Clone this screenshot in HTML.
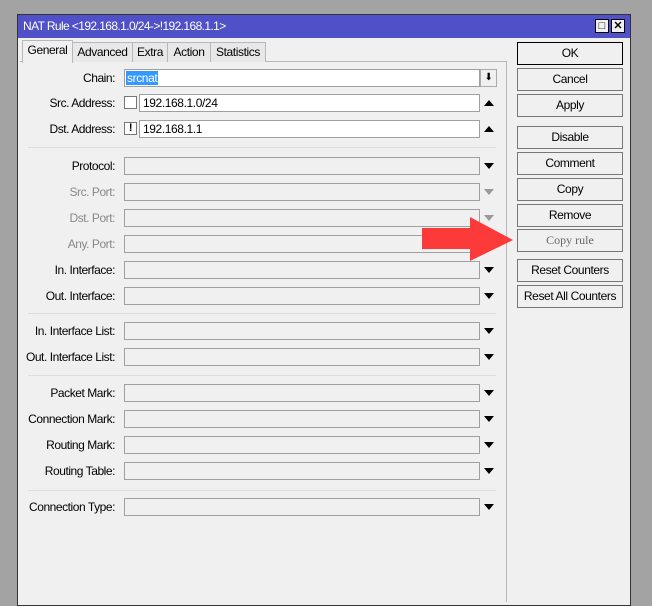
<html><head><style>
body{margin:0;width:652px;height:598px;background:#a3a3a3;position:relative;overflow:hidden;font-family:"Liberation Sans",Arial,sans-serif;font-size:12px;letter-spacing:-0.4px;color:#000}
.a{position:absolute;white-space:nowrap}
.win{left:17px;top:14px;width:612px;height:590px;background:#f0f0f0;border:1px solid #333}
.title{left:18px;top:15px;width:612px;height:23px;background:#5050c8;color:#fff;font-size:12px;line-height:23px;text-indent:5px;letter-spacing:-0.6px}
.tb{width:12px;height:12px;border:1px solid #000;background:#f0f0f0;top:19px;color:#000;font-size:11px;line-height:12px;text-align:center;font-weight:bold;letter-spacing:0}
.tab{top:42px;height:19px;border:1px solid #b8b8b8;border-bottom:none;background:#e8e8e8;line-height:19px;text-align:center;font-size:12px}
.lbl{left:0px;width:115px;text-align:right;height:18px;line-height:18px;letter-spacing:-0.45px}
.g{color:#888}
.f{left:124px;width:354px;height:16px;border:1px solid #a0a0a0;background:#f0f0f0;font-size:12px}
.w{background:#fff}
.sep{left:28px;width:468px;height:1px;background:#ddd}
.dd{left:484px;width:0;height:0;border-left:5px solid transparent;border-right:5px solid transparent;border-top:6px solid #000}
.ddg{border-top-color:#999}
.up{left:484px;width:0;height:0;border-left:5px solid transparent;border-right:5px solid transparent;border-bottom:6px solid #000}
.btn{left:517px;width:104px;height:21px;border:1px solid #777;background:#f0f0f0;text-align:center;line-height:21px;font-size:12px}
</style></head><body>
<div class="a win"></div>
<div class="a title">NAT Rule &lt;192.168.1.0/24-&gt;!192.168.1.1&gt;</div>
<div class="a tb" style="left:595px">&#9633;</div>
<div class="a tb" style="left:611px">✕</div>
<div class="a" style="left:20px;top:61px;width:486px;height:540px;border-top:1px solid #b8b8b8;border-right:1px solid #b8b8b8"></div>
<div class="a tab" style="left:22px;top:40px;width:49px;height:22px;background:#f0f0f0">General</div>
<div class="a tab" style="left:72px;width:59px">Advanced</div>
<div class="a tab" style="left:132px;width:34px">Extra</div>
<div class="a tab" style="left:167px;width:42px">Action</div>
<div class="a tab" style="left:210px;width:54px">Statistics</div>

<div class="a lbl" style="top:69px">Chain:</div>
<div class="a f w" style="top:69px;width:354px"><span style="background:#3399ff;color:#fff;padding:0 1px;margin-left:1px;line-height:16px">srcnat</span></div>
<div class="a" style="left:480px;top:69px;width:15px;height:16px;border:1px solid #aaa;background:#f0f0f0;text-align:center;font-size:10px;line-height:16px">&#11015;</div>

<div class="a lbl" style="top:94px">Src. Address:</div>
<div class="a" style="left:124px;top:96px;width:11px;height:11px;border:1px solid #777;background:#fff"></div>
<div class="a f w" style="left:139px;top:94px;width:339px;line-height:16px;text-indent:3px">192.168.1.0/24</div>
<div class="a up" style="top:100px"></div>

<div class="a lbl" style="top:120px">Dst. Address:</div>
<div class="a" style="left:124px;top:122px;width:11px;height:11px;border:1px solid #777;background:#fff;font-weight:bold;font-size:11px;line-height:11px;text-align:center">!</div>
<div class="a f w" style="left:139px;top:120px;width:339px;line-height:16px;text-indent:3px">192.168.1.1</div>
<div class="a up" style="top:126px"></div>
<div class="a sep" style="top:147px"></div>

<div class="a lbl" style="top:157px">Protocol:</div><div class="a f" style="top:157px"></div><div class="a dd" style="top:163px"></div>
<div class="a lbl g" style="top:183px">Src. Port:</div><div class="a f" style="top:183px"></div><div class="a dd ddg" style="top:189px"></div>
<div class="a lbl g" style="top:209px">Dst. Port:</div><div class="a f" style="top:209px"></div><div class="a dd ddg" style="top:215px"></div>
<div class="a lbl g" style="top:235px">Any. Port:</div><div class="a f" style="top:235px"></div>
<div class="a lbl" style="top:261px">In. Interface:</div><div class="a f" style="top:261px"></div><div class="a dd" style="top:267px"></div>
<div class="a lbl" style="top:287px">Out. Interface:</div><div class="a f" style="top:287px"></div><div class="a dd" style="top:293px"></div>
<div class="a sep" style="top:313px"></div>
<div class="a lbl" style="top:322px">In. Interface List:</div><div class="a f" style="top:322px"></div><div class="a dd" style="top:328px"></div>
<div class="a lbl" style="top:348px">Out. Interface List:</div><div class="a f" style="top:348px"></div><div class="a dd" style="top:354px"></div>
<div class="a sep" style="top:375px"></div>
<div class="a lbl" style="top:384px">Packet Mark:</div><div class="a f" style="top:384px"></div><div class="a dd" style="top:390px"></div>
<div class="a lbl" style="top:410px">Connection Mark:</div><div class="a f" style="top:410px"></div><div class="a dd" style="top:416px"></div>
<div class="a lbl" style="top:436px">Routing Mark:</div><div class="a f" style="top:436px"></div><div class="a dd" style="top:442px"></div>
<div class="a lbl" style="top:462px">Routing Table:</div><div class="a f" style="top:462px"></div><div class="a dd" style="top:468px"></div>
<div class="a sep" style="top:490px"></div>
<div class="a lbl" style="top:498px">Connection Type:</div><div class="a f" style="top:498px"></div><div class="a dd" style="top:504px"></div>

<div class="a btn" style="top:42px;border:1px solid #000">OK</div>
<div class="a btn" style="top:68px">Cancel</div>
<div class="a btn" style="top:94px">Apply</div>
<div class="a btn" style="top:126px">Disable</div>
<div class="a btn" style="top:152px">Comment</div>
<div class="a btn" style="top:178px">Copy</div>
<div class="a btn" style="top:204px">Remove</div>
<div class="a btn" style="top:229px;font-family:'Liberation Serif',serif;color:#666;letter-spacing:0">Copy rule</div>
<div class="a btn" style="top:259px">Reset Counters</div>
<div class="a btn" style="top:285px">Reset All Counters</div>

<svg class="a" style="left:0;top:0" width="652" height="598"><polygon points="422,228 470,228 470,217 513,240 470,261 470,249 422,249" fill="#fc3a3a"/></svg>
</body></html>
